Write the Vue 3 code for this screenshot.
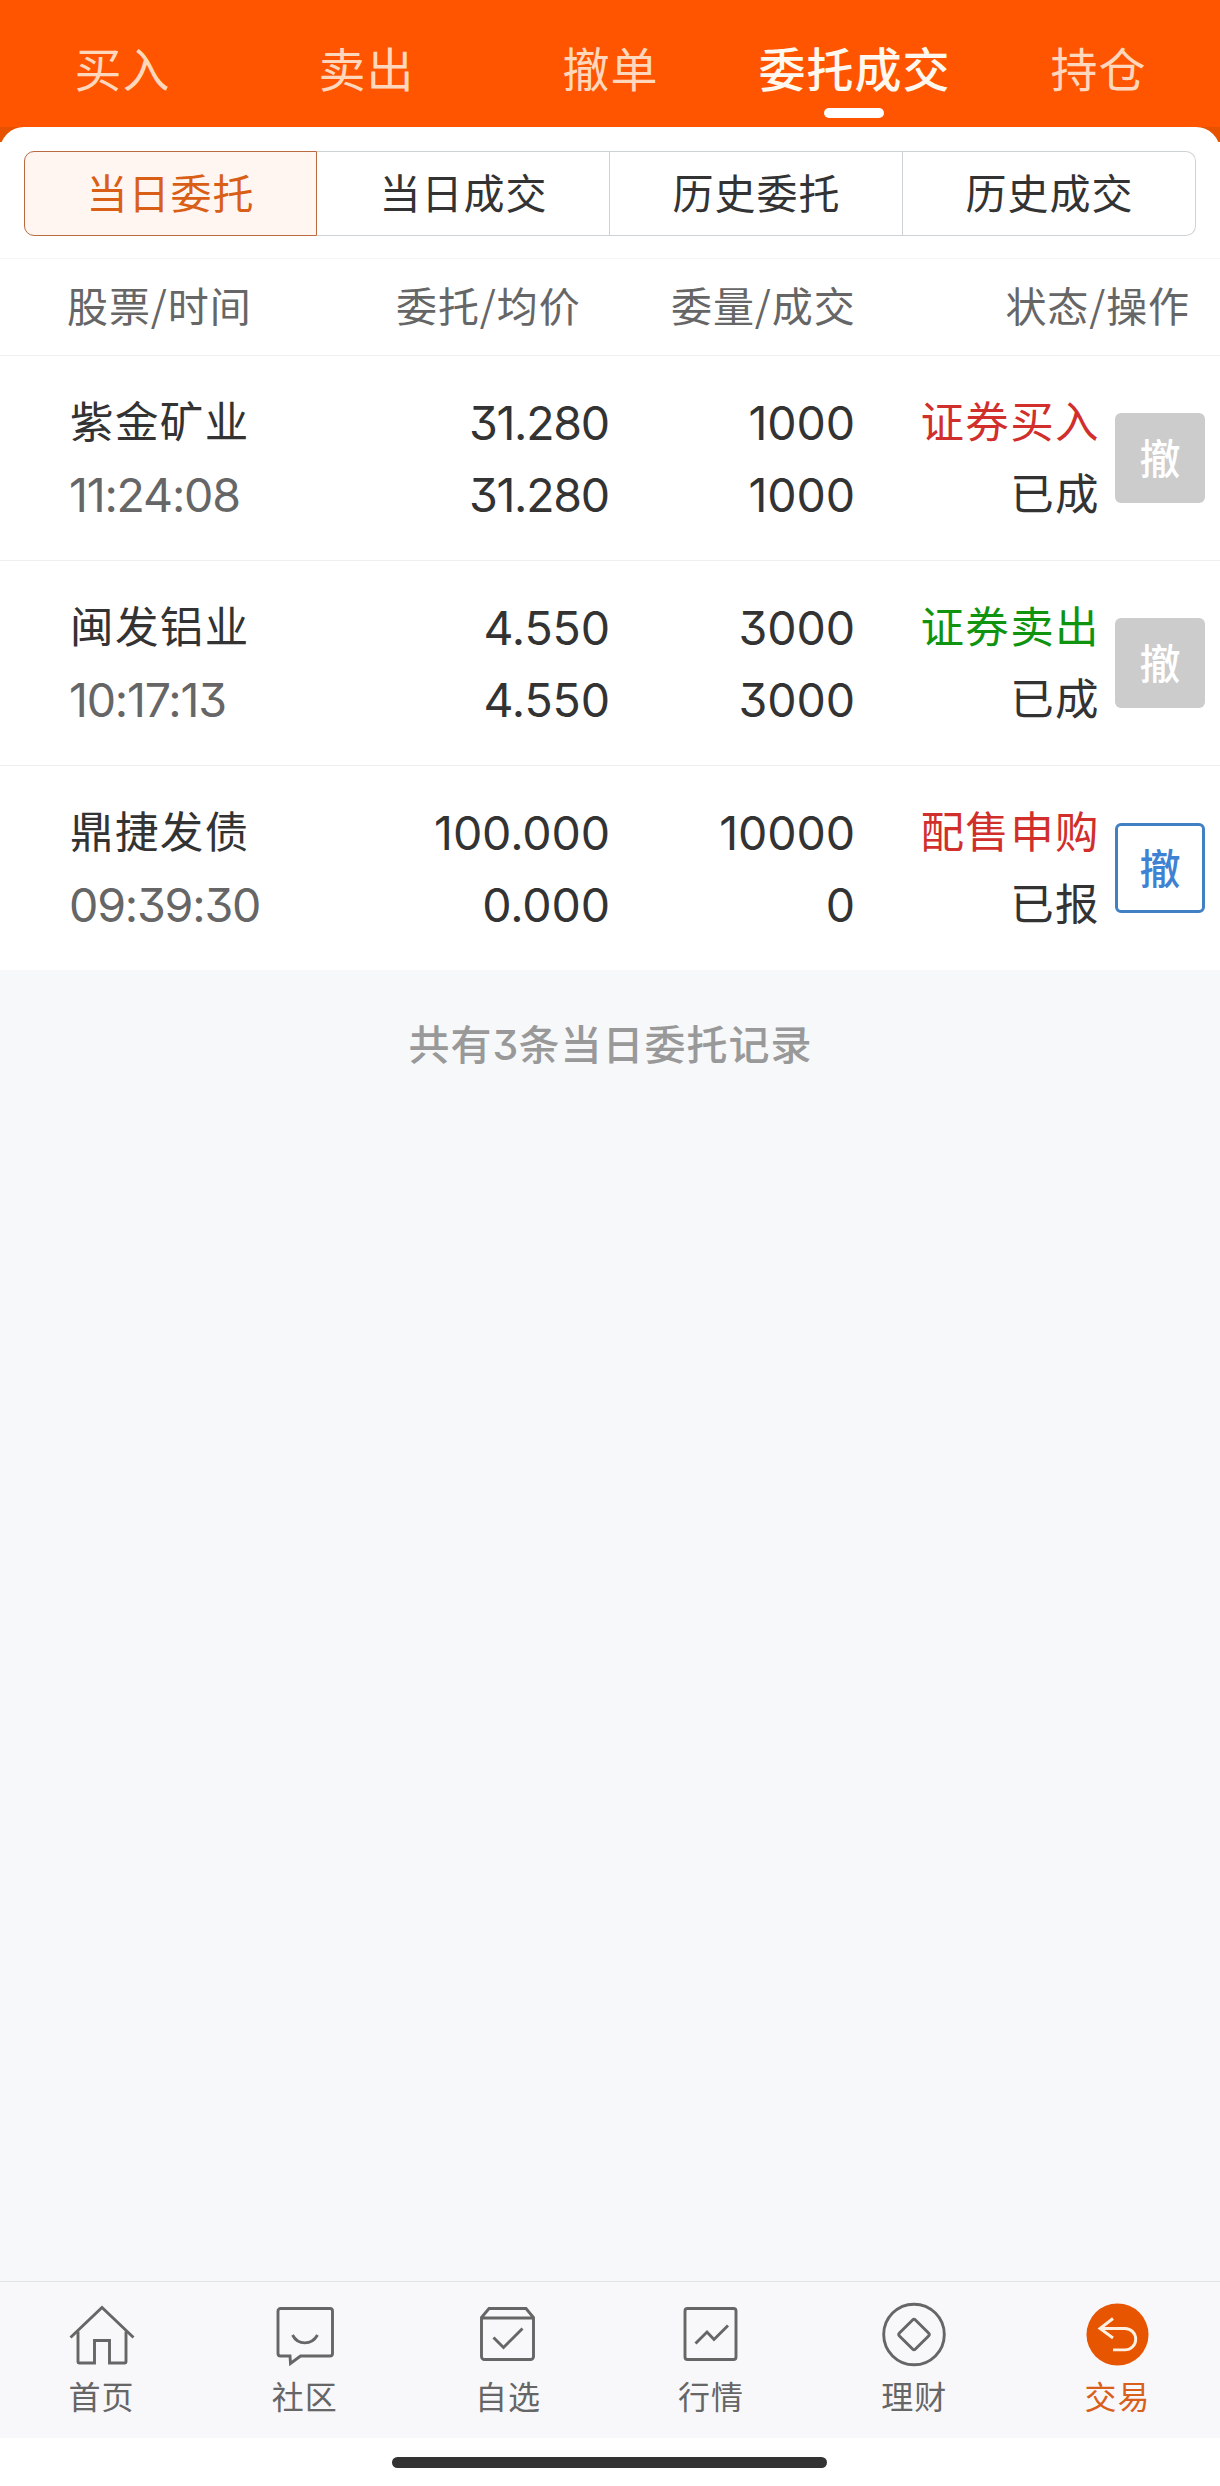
<script setup>
const topTabs = ['买入', '卖出', '撤单', '委托成交', '持仓']
const activeTop = '委托成交'
const segments = ['当日委托', '当日成交', '历史委托', '历史成交']
const orders = [
  { name: '紫金矿业', time: '11:24:08', price: '31.280', avg: '31.280', qty: '1000', done: '1000', side: '证券买入', tone: 'buy', status: '已成', open: false },
  { name: '闽发铝业', time: '10:17:13', price: '4.550', avg: '4.550', qty: '3000', done: '3000', side: '证券卖出', tone: 'sell', status: '已成', open: false },
  { name: '鼎捷发债', time: '09:39:30', price: '100.000', avg: '0.000', qty: '10000', done: '0', side: '配售申购', tone: 'buy', status: '已报', open: true },
]
const nav = ['首页', '社区', '自选', '行情', '理财', '交易']

const isTight = (value) => /[28]/.test(value)
</script>

<template>
  <div class="app">
    <header class="top">
      <div v-for="t in topTabs" :key="t" class="top-tab" :class="{ active: t === activeTop }">
        <span>{{ t }}</span>
      </div>
    </header>

    <div class="sheet-back">
      <div class="sheet">
        <div class="segments">
          <div v-for="(s, i) in segments" :key="s" class="segment" :class="{ active: i === 0 }">{{ s }}</div>
        </div>
      </div>
    </div>

    <div class="grid head">
      <span class="h1">股票/时间</span>
      <span class="h2">委托/均价</span>
      <span class="h3">委量/成交</span>
      <span class="h4">状态/操作</span>
    </div>

    <div v-for="o in orders" :key="o.name" class="grid row">
      <div class="cell first"><span>{{ o.name }}</span><span class="num time">{{ o.time }}</span></div>
      <div class="cell numbers">
        <span class="num" :class="{ tight: isTight(o.price) }">{{ o.price }}</span>
        <span class="num" :class="{ tight: isTight(o.avg) }">{{ o.avg }}</span>
      </div>
      <div class="cell numbers"><span class="num">{{ o.qty }}</span><span class="num">{{ o.done }}</span></div>
      <div class="cell state"><span :class="o.tone">{{ o.side }}</span><span>{{ o.status }}</span></div>
      <button class="cancel" :class="{ open: o.open }">撤</button>
    </div>

    <main class="rest">
      <p class="summary">共有<span class="count">3</span>条当日委托记录</p>
    </main>

    <nav class="nav">
      <div v-for="(n, i) in nav" :key="n" class="nav-item" :class="{ active: i === 5 }">
        <svg width="68" height="68" viewBox="0 0 68 68" fill="none" stroke="currentColor" stroke-width="2.9">
          <g v-if="i === 0">
            <path d="M2.5 37.5 34 7.5 65.5 37.5" />
            <path d="M10 31.5V62a1 1 0 0 0 1 1H26.5V40.5H41.5V63H57a1 1 0 0 0 1-1V31.5" />
          </g>
          <g v-else-if="i === 1">
            <path d="M9.5 8.5H59a2.5 2.5 0 0 1 2.5 2.5V53.5a2.5 2.5 0 0 1-2.5 2.5H29.5L19.5 63.5 19 56H9.5a2.5 2.5 0 0 1-2.5-2.5V11a2.5 2.5 0 0 1 2.5-2.5Z" />
            <path d="M21.5 35c5.5 10.5 19 10.5 25 0" />
          </g>
          <g v-else-if="i === 2">
            <path d="M7.5 17.5 15 8.5H52L59.5 17.5V56.5a3 3 0 0 1-3 3H10.5a3 3 0 0 1-3-3ZM8 18H59" />
            <path d="M19.5 37.5 29.5 47.5 48.5 28.5" />
          </g>
          <g v-else-if="i === 3">
            <rect x="8" y="8.5" width="51" height="51" rx="2.5" />
            <path d="M18.5 43.5 30 32 37 39.5 51 25.5" />
          </g>
          <g v-else-if="i === 4">
            <circle cx="34" cy="34.5" r="30.3" />
            <rect x="22.7" y="23.2" width="22.6" height="22.6" rx="2" transform="rotate(45 34 34.5)" />
          </g>
          <g v-else>
            <circle cx="34.5" cy="34.5" r="31" fill="#e85500" stroke="none" />
            <path stroke="#fff0e2" d="M30 18.500 17 28.500 30 38M17.500 28.500H42a10.700 10.700 0 0 1 0 21.400H30" />
          </g>
        </svg>
        <span>{{ n }}</span>
      </div>
    </nav>
    <div class="gesture"><i></i></div>
  </div>
</template>

<style>
body {
  margin: 0;
}
</style>

<style scoped>
.app {
  width: 1220px;
  height: 2486px;
  display: flex;
  flex-direction: column;
  background: #f7f8fa;
  color: #333;
  font-family: "Noto Sans CJK SC", sans-serif;
  overflow: hidden;
}
.top {
  height: 127px;
  flex: none;
  display: grid;
  grid-template-columns: repeat(5, 1fr);
  background: #ff5500;
}
.top-tab {
  position: relative;
  padding: 37px 0 0 1px;
  line-height: 60px;
  text-align: center;
  font-size: 47px;
  letter-spacing: 1px;
  color: #ffd7bd;
}
.top-tab.active {
  color: #fff8ef;
  font-weight: 500;
}
.top-tab.active::after {
  content: "";
  position: absolute;
  left: 50%;
  bottom: 9px;
  width: 60px;
  height: 10px;
  margin-left: -30px;
  border-radius: 5px;
  background: #fff;
}
.sheet-back {
  flex: none;
  background: linear-gradient(#e65200 15px, #fff 15px);
}
.sheet {
  box-sizing: border-box;
  height: 132px;
  padding: 24px 24px 0;
  background: #fff;
  border-radius: 24px 24px 0 0;
  border-bottom: 1px solid #f4f5f6;
}
.segments {
  display: grid;
  grid-template-columns: repeat(4, 1fr);
}
.segment {
  box-sizing: border-box;
  height: 85px;
  padding-left: 1px;
  border: 1px solid #cdd2d4;
  border-left-width: 0;
  line-height: 79px;
  text-align: center;
  font-size: 41px;
  letter-spacing: 1px;
}
.segment:last-child {
  border-radius: 0 10px 10px 0;
}
.segment.active {
  padding-left: 0;
  border: 1px solid #b96a3f;
  border-radius: 10px 0 0 10px;
  background: #fff5f1;
  color: #d95f16;
}
.grid {
  flex: none;
  box-sizing: border-box;
  background: #fff;
}
.head {
  display: flex;
  height: 97px;
  border-bottom: 1px solid #eeeff0;
  font-size: 41px;
  letter-spacing: 0.9px;
  line-height: 91px;
  color: #666;
  padding: 0 30px 0 67px;
}
.h1 { width: 329px; }
.h2 { width: 275px; }
.h3 { flex: 1; }
.row {
  display: grid;
  grid-template-columns: 365px 245px 245px 245px 105px;
  height: 205px;
  border-bottom: 1px solid #eeeff0;
  align-items: start;
  font-size: 43.5px;
  letter-spacing: 1.4px;
}
.cell {
  display: flex;
  flex-direction: column;
  align-items: flex-end;
  padding-top: 28px;
  line-height: 72px;
  white-space: nowrap;
}
.cell.first {
  align-items: flex-start;
  padding-left: 70px;
}
.cell.numbers {
  padding-top: 31px;
}
.cell span {
  height: 72px;
}
.num {
  font-family: Inter, sans-serif;
  font-size: 46.5px;
  font-weight: 370;
  letter-spacing: -0.1px;
  font-feature-settings: "cv09" 1;
}
.num.tight {
  letter-spacing: -1.3px;
  margin-right: 1.3px;
}
.cell .time {
  color: #666;
  letter-spacing: -1.2px;
  margin-left: -1px;
  padding-top: 3px;
}
.buy { color: #d12f2c; }
.sell { color: #109410; }
.cancel {
  box-sizing: border-box;
  width: 90px;
  height: 90px;
  margin: 57px 0 0 15px;
  padding: 0 0 3px;
  border: none;
  border-radius: 6px;
  background: #ccc;
  color: #fff;
  font: 500 41px/1 "Noto Sans CJK SC", sans-serif;
}
.cancel.open {
  border: 3px solid #4280c4;
  background: #fff;
  color: #3e82d3;
}
.rest {
  flex: 1;
  margin-top: -1px;
  background: #f7f8fa;
}
.summary {
  margin: 42px 0 0 1px;
  text-align: center;
  line-height: 60px;
  font-size: 41px;
  font-weight: 500;
  letter-spacing: 1px;
  color: #999;
}
.count {
  font-family: Inter, sans-serif;
  font-weight: 500;
  letter-spacing: 0;
  font-feature-settings: "cv09" 1;
}
.nav {
  box-sizing: border-box;
  flex: none;
  height: 157px;
  padding-right: 1px;
  border-top: 1px solid #e3e4e6;
  background: #f8f8fa;
  display: grid;
  grid-template-columns: repeat(6, 1fr);
}
.nav-item {
  display: flex;
  flex-direction: column;
  align-items: center;
  padding-top: 18px;
  color: #666;
}
.nav-item svg {
  flex: none;
}
.nav-item span {
  font-size: 32px;
  letter-spacing: 1px;
  line-height: 40px;
  margin-top: 7px;
}
.nav-item.active {
  color: #d9601c;
}
.gesture {
  flex: none;
  height: 48px;
  display: flex;
  justify-content: center;
  background: #fff;
}
.gesture i {
  width: 435px;
  height: 11px;
  margin: 19px 1px 0 0;
  border-radius: 6px;
  background: #333;
}
</style>
